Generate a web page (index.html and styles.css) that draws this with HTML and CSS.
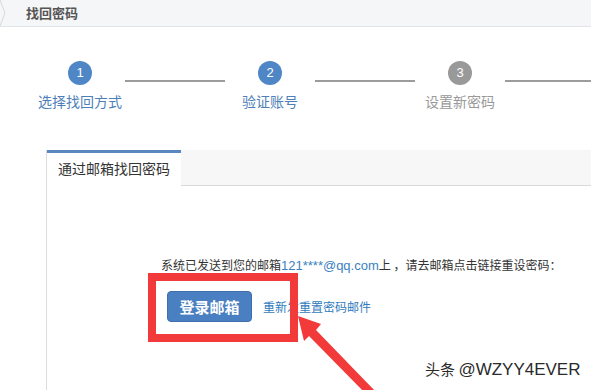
FILE: index.html
```html
<!DOCTYPE html>
<html lang="zh-CN">
<head>
<meta charset="utf-8">
<title>找回密码</title>
<link rel="stylesheet" href="styles.css">
</head>
<body>
<div class="page">
  <div class="topbar">
    <svg class="chev" width="8" height="26" viewBox="0 0 8 26"><polyline points="0,0 5,13 0,26" fill="none" stroke="#d8d8d8" stroke-width="1"/></svg>
    <span class="title">找回密码</span>
  </div>

  <div class="steps">
    <div class="step active">
      <div class="num">1</div>
      <div class="label">选择找回方式</div>
    </div>
    <div class="line"></div>
    <div class="step active">
      <div class="num">2</div>
      <div class="label">验证账号</div>
    </div>
    <div class="line"></div>
    <div class="step">
      <div class="num">3</div>
      <div class="label">设置新密码</div>
    </div>
    <div class="line"></div>
  </div>

  <div class="panel">
    <div class="tabs">
      <div class="tab">通过邮箱找回密码</div>
    </div>
    <div class="panel-body">
      <p class="msg">系统已发送到您的邮箱<span class="email">121****@qq.com</span>上 ，请去邮箱点击链接重设密码：</p>
      <div class="actions">
        <button class="btn">登录邮箱</button>
        <a class="resend" href="#">重新发重置密码邮件</a>
      </div>
    </div>
  </div>

  <div class="redbox"></div>
  <svg class="arrow" width="591" height="390" viewBox="0 0 591 390">
    <polygon points="298,316 321,324 316,330 376,392 368,396 309,336 304,341" fill="#f23a3a"/>
  </svg>
  <div class="watermark">头条 <span class="wm-latin">@WZYY4EVER</span></div>
</div>
</body>
</html>
```

FILE: styles.css
```css
html, body {
  margin: 0;
  padding: 0;
  background: #fff;
}
body {
  font-family: "Liberation Sans", "Noto Sans CJK SC", sans-serif;
  color: #333;
  overflow: hidden;
}
.page {
  position: relative;
  width: 591px;
  height: 390px;
  overflow: hidden;
}
.topbar {
  height: 26px;
  background: #f5f6f8;
  border-bottom: 1px solid #e3e4e6;
  display: flex;
  align-items: center;
}
.chev {
  flex: none;
  margin-right: 18px;
}
.title {
  font-family: "Noto Sans CJK SC", sans-serif;
  font-size: 13px;
  font-weight: bold;
  color: #555;
  line-height: 13px;
  margin-top: -2px;
}
.steps {
  display: flex;
  padding-left: 35px;
  padding-top: 34px;
  height: 56px;
}
.step {
  flex: none;
  width: 90px;
  display: flex;
  flex-direction: column;
  align-items: center;
}
.num {
  width: 24px;
  height: 24px;
  border-radius: 50%;
  background: #999;
  color: #fff;
  font-size: 13px;
  line-height: 24px;
  text-align: center;
}
.step.active .num {
  background: #4f86c6;
}
.label {
  margin-top: 8px;
  font-family: "Noto Sans CJK SC", sans-serif;
  font-size: 14px;
  line-height: 16px;
  color: #999;
  white-space: nowrap;
}
.step.active .label {
  color: #4f7fb8;
}
.line {
  flex: none;
  width: 100px;
  height: 2px;
  margin-top: 19px;
  background: #9c9c9c;
}
.panel {
  margin-left: 46px;
  margin-top: 33px;
  border-left: 1px solid #dcdcdc;
  height: 260px;
}
.tabs {
  height: 35px;
  background: #f7f7f7;
  border-bottom: 1px solid #dadada;
  display: flex;
}
.tab {
  width: 123px;
  padding-left: 11px;
  background: #fff;
  border-top: 3px solid #5b87c0;
  height: 33px;
  font-family: "Noto Sans CJK SC", sans-serif;
  font-size: 14px;
  line-height: 30px;
  color: #333;
}
.panel-body {
  padding-left: 114px;
  padding-top: 71px;
}
.msg {
  margin: 0;
  font-family: "Noto Sans CJK SC", sans-serif;
  font-size: 12px;
  line-height: 16px;
  color: #333;
  white-space: nowrap;
}
.email {
  font-family: "Liberation Sans", sans-serif;
  font-size: 13px;
  color: #3a7fc1;
}
.actions {
  display: flex;
  align-items: center;
  margin-top: 17px;
  padding-left: 6px;
}
.btn {
  width: 85px;
  height: 31px;
  border: 1px solid #3f70ad;
  border-radius: 4px;
  background: #4a7fc1;
  color: #fff;
  font-family: "Noto Sans CJK SC", sans-serif;
  font-size: 15px;
  font-weight: bold;
  padding: 0;
}
.resend {
  margin-left: 11px;
  font-family: "Noto Sans CJK SC", sans-serif;
  font-size: 12px;
  color: #2f7bbd;
  text-decoration: none;
}
.redbox {
  position: absolute;
  left: 148px;
  top: 273px;
  width: 134px;
  height: 53px;
  border: 8px solid #f23a3a;
}
.arrow {
  position: absolute;
  left: 0;
  top: 0;
}
.watermark {
  position: absolute;
  left: 425px;
  top: 359px;
  font-family: "Noto Sans CJK SC", sans-serif;
  font-size: 15px;
  line-height: 20px;
  color: #2a2a2a;
  white-space: nowrap;
  text-shadow: 0 0 2px #fff, 0 0 2px #fff;
}
.wm-latin {
  font-family: "Liberation Sans", sans-serif;
  font-size: 17px;
}
```
